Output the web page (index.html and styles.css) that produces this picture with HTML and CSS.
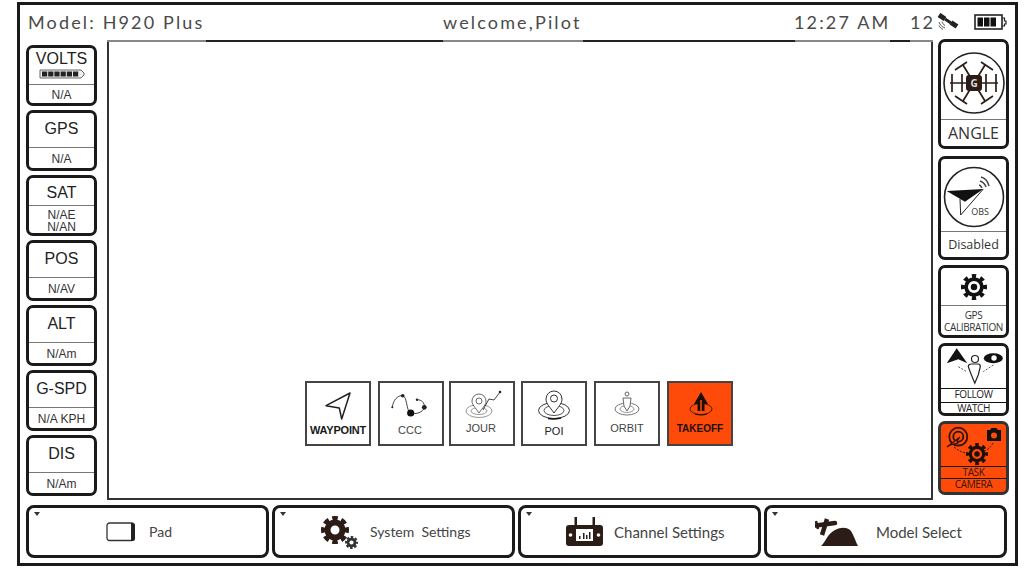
FILE: index.html
```html
<!DOCTYPE html>
<html lang="en">
<head>
    <meta charset="UTF-8">
    <title>H920 Plus</title>
    <link rel="stylesheet" href="styles.css">
</head>
<body>
    <!-- shared gears, used on the right column and the bottom bar -->
    <svg class="defs" width="0" height="0">
        <symbol id="gear" viewBox="-14 -14 28 28">
            <circle r="8.500" fill="none" stroke="currentColor" stroke-width="4"/>
            <circle r="11.500" fill="none" stroke="currentColor" stroke-width="5" pathLength="32" stroke-dasharray="2 2" stroke-dashoffset="1"/>
            <circle r="3.500" fill="currentColor"/>
        </symbol>
        <symbol id="gear-solid" viewBox="-14 -14 28 28">
            <circle r="7.500" fill="none" stroke="currentColor" stroke-width="6"/>
            <circle r="11.500" fill="none" stroke="currentColor" stroke-width="5" pathLength="32" stroke-dasharray="2.400 1.600" stroke-dashoffset="1.200"/>
        </symbol>
    </svg>

    <div class="frame">
        <!-- Top bar -->
        <div class="topbar">
            <span class="model">Model: H920 Plus</span>
            <span class="welcome">welcome,Pilot</span>
            <span class="clock">12:27 AM</span>
            <span class="sats">12</span>
            <svg class="sat-icon" width="22" height="18" viewBox="0 0 22 18">
                <path d="M2 2l6 4" fill="none" stroke="#222" stroke-width="5"/>
                <path d="M8 6l6 4" fill="none" stroke="#222" stroke-width="3"/>
                <path d="M14 9.500l6 4" fill="none" stroke="#222" stroke-width="5"/>
                <path d="M2 9c1 3 3 5 6 6M2 12.500c1 2 2 3 4 4M5 8.500c1 2 1 3 3 4" fill="none" stroke="#555" stroke-width="1"/>
            </svg>
            <svg class="batt-icon" width="33" height="16" viewBox="0 0 33 16">
                <rect x="1" y="1" width="27" height="14" fill="#fff" stroke="#222" stroke-width="1.600"/>
                <rect x="3.500" y="3.500" width="5.500" height="9" fill="#111"/>
                <rect x="10" y="3.500" width="5.500" height="9" fill="#111"/>
                <rect x="16.500" y="3.500" width="5.500" height="9" fill="#111"/>
                <path d="M28 4h2.500v3h1.500v3h-1.500v2h-2.500" fill="none" stroke="#222" stroke-width="1.200"/>
            </svg>
        </div>

        <div class="main">
            <!-- Left column -->
            <div class="stats">
                <div class="stat stat--volts">
                    <div class="stat__name">
                        <span>VOLTS</span>
                        <svg class="mini-batt" width="46" height="10" viewBox="0 0 46 10">
                            <path d="M1 1h41l3 3v2l-3 3h-41z" fill="#eee" stroke="#666" stroke-width="1"/>
                            <path d="M3 5h37" stroke="#222" stroke-width="5" stroke-dasharray="5.200 1"/>
                        </svg>
                    </div>
                    <div class="stat__value">N/A</div>
                </div>
                <div class="stat">
                    <div class="stat__name">GPS</div>
                    <div class="stat__value">N/A</div>
                </div>
                <div class="stat stat--sat">
                    <div class="stat__name">SAT</div>
                    <div class="stat__value stat__value--double">N/AE<br>N/AN</div>
                </div>
                <div class="stat">
                    <div class="stat__name">POS</div>
                    <div class="stat__value">N/AV</div>
                </div>
                <div class="stat">
                    <div class="stat__name">ALT</div>
                    <div class="stat__value">N/Am</div>
                </div>
                <div class="stat">
                    <div class="stat__name">G-SPD</div>
                    <div class="stat__value">N/A KPH</div>
                </div>
                <div class="stat">
                    <div class="stat__name">DIS</div>
                    <div class="stat__value">N/Am</div>
                </div>
            </div>

            <!-- Map area with flight modes -->
            <div class="map">
                <div class="modes">
                    <div class="mode">
                        <svg class="mode__icon" width="62" height="40" viewBox="0 0 62 40">
                            <path d="M43 10L19 22.700l13.300 2.300L34.700 36z" fill="none" stroke="#222" stroke-width="1.500" stroke-linejoin="round"/>
                        </svg>
                        <span class="mode__label mode__label--bold">WAYPOINT</span>
                    </div>
                    <div class="mode">
                        <svg class="mode__icon" width="62" height="40" viewBox="0 0 62 40">
                            <path d="M12.300 24.300C13 17 18 12 22.700 12.700S26 28 30.700 30s13-1 13.600-5.700-3-7.600-7-7.600" fill="none" stroke="#444" stroke-width="1"/>
                            <circle cx="12.300" cy="24.300" r="1" fill="#222"/>
                            <circle cx="22.700" cy="12.700" r="1.800" fill="#222"/>
                            <circle cx="30.700" cy="30" r="3.600" fill="#111"/>
                            <circle cx="44.300" cy="24.300" r="2.400" fill="#222"/>
                            <circle cx="37" cy="16.700" r="1.200" fill="#222"/>
                        </svg>
                        <span class="mode__label mode__label--left">CCC</span>
                    </div>
                    <div class="mode mode--jour">
                        <svg class="mode__icon" width="62" height="40" viewBox="0 0 62 40">
                            <ellipse cx="28" cy="28" rx="13" ry="6.500" fill="none" stroke="#999" stroke-width="1"/>
                            <ellipse cx="28" cy="28" rx="8" ry="3.500" fill="none" stroke="#999" stroke-width="1"/>
                            <path d="M28 30c-4-6-7-8-7-12a7 7 0 0 1 14 0c0 4-3 6-7 12z" fill="#fff" stroke="#666" stroke-width="1"/>
                            <circle cx="28" cy="18" r="3" fill="none" stroke="#666" stroke-width="1"/>
                            <path d="M32 27l6-11 5 1 6-8" fill="none" stroke="#444" stroke-width="1"/>
                            <circle cx="49" cy="9" r="1.300" fill="#222"/>
                        </svg>
                        <span class="mode__label mode__label--up mode__label--left">JOUR</span>
                    </div>
                    <div class="mode mode--poi">
                        <svg class="mode__icon" width="62" height="40" viewBox="0 0 62 40">
                            <ellipse cx="31" cy="27.500" rx="15.500" ry="8" fill="none" stroke="#333" stroke-width="1"/>
                            <ellipse cx="31" cy="27.500" rx="10" ry="5" fill="none" stroke="#555" stroke-width="1"/>
                            <path d="M31 30c-4-6-8-9-8-14a8 8 0 0 1 16 0c0 5-4 8-8 14z" fill="#fff" stroke="#333" stroke-width="1"/>
                            <circle cx="31" cy="15.500" r="3.500" fill="none" stroke="#333" stroke-width="1"/>
                            <path d="M25 35.500q6 1 13-.5" fill="none" stroke="#111" stroke-width="1.500"/>
                        </svg>
                        <span class="mode__label mode__label--down">POI</span>
                    </div>
                    <div class="mode">
                        <svg class="mode__icon" width="62" height="40" viewBox="0 0 62 40">
                            <ellipse cx="31" cy="26" rx="12" ry="6" fill="none" stroke="#777" stroke-width="1"/>
                            <ellipse cx="31" cy="26" rx="7" ry="3.500" fill="none" stroke="#999" stroke-width="1"/>
                            <circle cx="31" cy="11" r="2" fill="none" stroke="#666" stroke-width="1"/>
                            <path d="M27 15h8l-1 8-3 5-3-5z" fill="#fff" stroke="#666" stroke-width="1"/>
                        </svg>
                        <span class="mode__label mode__label--up">ORBIT</span>
                    </div>
                    <div class="mode mode--active">
                        <svg class="mode__icon" width="62" height="40" viewBox="0 0 62 40">
                            <ellipse cx="32" cy="26" rx="11" ry="5.500" fill="none" stroke="#5a1a00" stroke-width="1"/>
                            <path d="M32 9l-7 12h3.500v7h7v-7H39z" fill="#1c0f08"/>
                            <path d="M32 17v11" stroke="#ff4b0a" stroke-width="1.500"/>
                            <path d="M26 31q6 2 12 0" fill="none" stroke="#1c0f08" stroke-width="1.200"/>
                        </svg>
                        <span class="mode__label mode__label--takeoff">TAKEOFF</span>
                    </div>
                </div>
            </div>

            <!-- Right column -->
            <div class="tools">
                <div class="tool tool--angle">
                    <div class="tool__icon">
                        <svg width="62" height="62" viewBox="-31 -31 62 62">
                            <circle r="30" fill="#fff" stroke="#222" stroke-width="1.600"/>
                            <g fill="none" stroke="#2b1d16" stroke-width="1.700">
                                <path d="M-24 0H24M-11-18L11 18M11-18L-11 18"/>
                                <path d="M-22-9V9M-12-9V9M12-9V9M22-9V9"/>
                                <path d="M-19-13L-7-21M19-13L7-21M-19 13L-7 21M19 13L7 21"/>
                            </g>
                            <rect x="-8" y="-8" width="16" height="16" rx="3" fill="#2b1d16"/>
                            <text class="drone-g" y="3.500" text-anchor="middle">G</text>
                        </svg>
                    </div>
                    <div class="tool__label tool__label--big">ANGLE</div>
                </div>
                <div class="tool tool--obs">
                    <div class="tool__icon">
                        <svg width="62" height="62" viewBox="-1 -1 62 62">
                            <circle cx="30" cy="30" r="29.500" fill="#fff" stroke="#222" stroke-width="1.600"/>
                            <path d="M2.700 24L39.300 22 21 34.700z" fill="#111"/>
                            <path d="M39.300 22L16.700 48 16 32" fill="none" stroke="#222" stroke-width="1"/>
                            <path d="M36 14c3 1 5 3 6 6M37 10c4 1 7 5 8 9M35 18c1 0 2 1 3 3" fill="none" stroke="#444" stroke-width="1.500"/>
                            <text class="obs-text" x="36" y="48" text-anchor="middle">OBS</text>
                        </svg>
                    </div>
                    <div class="tool__label">Disabled</div>
                </div>
                <div class="tool tool--small">
                    <div class="tool__icon">
                        <svg class="gear" width="26" height="26"><use href="#gear"/></svg>
                    </div>
                    <div class="tool__label tool__label--tiny">GPS<br>CALIBRATION</div>
                </div>
                <div class="tool tool--small tool--split">
                    <div class="tool__icon">
                        <svg width="67" height="43" viewBox="0 0 67 43">
                            <path d="M6.700 18.300L16.700 3.300l10.600 15-9-4z" fill="#111"/>
                            <circle cx="35" cy="14" r="3.500" fill="#fff" stroke="#222" stroke-width="1.200"/>
                            <path d="M28.300 21.700q0-2.700 3-2.700h7q2 0 2 2.700l-2 8-3.500 8.500-3.500-8.500z" fill="#fff" stroke="#222" stroke-width="1.200"/>
                            <ellipse cx="53.300" cy="13.300" rx="9.500" ry="5" fill="#111"/>
                            <circle cx="54" cy="13" r="2.700" fill="#fff"/>
                            <path d="M18.300 21.700l8.400 5M53.300 20l-10 6.700" fill="none" stroke="#555" stroke-width="1" stroke-dasharray="2 1.500"/>
                        </svg>
                    </div>
                    <div class="tool__label tool__label--tiny tool__label--line">FOLLOW</div>
                    <div class="tool__label tool__label--tiny tool__label--line">WATCH</div>
                </div>
                <div class="tool tool--small tool--split tool--active">
                    <div class="tool__icon">
                        <svg width="67" height="43" viewBox="0 0 67 43">
                            <circle cx="18.300" cy="13.700" r="9" fill="none" stroke="#2a1208" stroke-width="1.800"/>
                            <circle cx="18.300" cy="13.700" r="5" fill="none" stroke="#2a1208" stroke-width="1.800"/>
                            <path d="M7 24l13-10-3 4 1 2-8 2z" fill="#ff4b0a" stroke="#2a1208" stroke-width="1.200"/>
                            <path d="M14 24q6 5 12 6M44 28q5-1 9-8" fill="none" stroke="#2a1208" stroke-width="1" stroke-dasharray="2 1.500"/>
                            <path d="M47 7h3l1.500-2h5L58 7h3v11H47z" fill="#111"/>
                            <circle cx="54" cy="12.500" r="3" fill="#ff4b0a"/>
                        </svg>
                        <svg class="gear gear--task" width="22" height="22"><use href="#gear"/></svg>
                    </div>
                    <div class="tool__label tool__label--tiny tool__label--line">TASK</div>
                    <div class="tool__label tool__label--tiny tool__label--line">CAMERA</div>
                </div>
            </div>
        </div>

        <!-- Bottom bar -->
        <div class="bottom">
            <div class="nav nav--pad">
                <svg class="nav__icon" width="30" height="20" viewBox="0 0 30 20">
                    <rect x="1" y="1" width="27" height="17.500" rx="2.500" fill="#fff" stroke="#333" stroke-width="1.300"/>
                    <path d="M25 1h1.500A2.500 2.500 0 0 1 29 3.500v13a2.500 2.500 0 0 1-2.500 2.500H25z" fill="#222"/>
                </svg>
                <span class="nav__text">Pad</span>
            </div>
            <div class="nav nav--system">
                <span class="nav__gears">
                    <svg class="gear gear--big" width="28" height="28"><use href="#gear-solid"/></svg>
                    <svg class="gear gear--mini" width="13" height="13"><use href="#gear-solid"/></svg>
                </span>
                <span class="nav__text">System&nbsp; Settings</span>
            </div>
            <div class="nav nav--channel">
                <svg class="nav__icon" width="38" height="30" viewBox="0 0 38 30">
                    <path d="M9 0h1.500v9H9zM27 0h1.500v9H27z" fill="#2b1d16" stroke="#2b1d16"/>
                    <rect x="0" y="8" width="37" height="21" rx="3" fill="#2b1d16"/>
                    <rect x="10" y="12" width="17" height="12" fill="#fff"/>
                    <path d="M13 22v-3h1.500v3zM17 22v-6h1.500v6zM20 22v-4h1.500v4zM23 22v-7h1.500v7z" fill="#2b1d16"/>
                    <circle cx="4.500" cy="18" r="1.800" fill="#fff"/>
                    <circle cx="32.500" cy="18" r="1.800" fill="#fff"/>
                </svg>
                <span class="nav__text">Channel Settings</span>
            </div>
            <div class="nav nav--model">
                <svg class="nav__icon" width="44" height="31" viewBox="0 0 44 31">
                    <path d="M6 30c4-3 6-12 14-16 6-3 11-3 15 0 3 3 5 10 8 16z" fill="#2b1d16"/>
                    <path d="M1 9.500L20 7" fill="none" stroke="#2b1d16" stroke-width="4.500" stroke-linecap="round"/>
                    <path d="M12 3L7 19" fill="none" stroke="#2b1d16" stroke-width="4.500"/>
                    <path d="M1 5l2 8" fill="none" stroke="#2b1d16" stroke-width="2.500"/>
                </svg>
                <span class="nav__text">Model Select</span>
            </div>
        </div>
    </div>
</body>
</html>
```
FILE: styles.css
```css
* {
    margin: 0;
    padding: 0;
    box-sizing: border-box;
}

body {
    font-family: "Liberation Sans", Arial, sans-serif;
    background-color: #fff;
    color: #222;
    overflow: hidden;
}

.defs {
    position: absolute;
}

.frame {
    width: 1001px;
    height: 564px;
    margin: 2px 0 0 17px;
    padding: 0 6px;
    border: 3px solid #1a1a1a;
}

/* top bar */
.topbar {
    display: flex;
    align-items: center;
    height: 34px;
    margin-left: -6px;
    font-family: Lato, sans-serif;
    font-size: 18px;
    letter-spacing: 2.15px;
    color: #4a4a4a;
}

.model {
    width: 423px;
    padding-left: 8px;
}

.welcome {
    width: 351px;
}

.clock {
    width: 116px;
}

.sats {
    width: 27px;
}

.sat-icon {
    margin-right: 15px;
}

/* main row */
.main {
    display: flex;
    height: 461px;
    margin-bottom: 5px;
}

.stats {
    display: flex;
    flex-direction: column;
    gap: 4px;
    width: 71px;
    padding-top: 6px;
}

.stat {
    display: flex;
    flex-direction: column;
    height: 61px;
    border: 3px solid #1a1a1a;
    border-radius: 7px;
}

.stat__name {
    display: flex;
    flex-direction: column;
    align-items: center;
    justify-content: center;
    height: 35px;
    padding-bottom: 2px;
    font-size: 16px;
    line-height: 16px;
    border-bottom: 1px solid #777;
}

.stat--volts .stat__name {
    height: 37px;
    justify-content: flex-start;
    padding: 3px 0 0;
}

.stat--sat .stat__name {
    padding: 3px 0 0;
}

.mini-batt {
    margin-top: 2px;
}

.stat__value {
    flex: 1;
    display: flex;
    align-items: center;
    justify-content: center;
    padding-top: 1px;
    font-size: 12px;
    color: #333;
}

.stat__value--double {
    display: block;
    padding-top: 3px;
    text-align: center;
    line-height: 12px;
}

.map {
    position: relative;
    display: flex;
    flex-direction: column;
    justify-content: flex-end;
    width: 826px;
    margin: 1px 5px 0 10px;
    padding-bottom: 52px;
    border: 2px solid #333;
}

/* the top line is grey under the title texts */
.map::before {
    content: "";
    position: absolute;
    top: -2px;
    left: -2px;
    right: -2px;
    height: 2px;
    background: linear-gradient(to right, #888 0, #888 99px, #222 99px, #222 336px, #888 336px, #888 476px, #222 476px, #222 688px, #888 688px, #888 783px, #222 783px, #222 803px, #888 803px);
}

.modes {
    display: flex;
    justify-content: center;
    gap: 7px;
    margin-right: 2px;
}

.mode {
    display: flex;
    flex-direction: column;
    align-items: center;
    width: 66px;
    height: 65px;
    border: 2px solid #444;
}

.mode--jour {
    margin-left: -2px;
}

.mode--poi {
    margin-left: -1px;
}

.mode--active {
    background-color: #ff4b0a;
}

.mode__icon {
    display: block;
    flex: none;
}

.mode__label {
    font-size: 11px;
    line-height: 14px;
    color: #444;
}

.mode__label--bold {
    font-weight: bold;
    color: #1a1a1a;
    letter-spacing: -0.2px;
}

.mode__label--up {
    margin-top: -2px;
}

.mode__label--left {
    margin-right: 2px;
}

.mode__label--takeoff {
    margin-top: -1px;
    font-size: 10px;
    font-weight: bold;
    color: #1c0f08;
}

.mode__label--down {
    margin-top: 1px;
    color: #222;
}

/* right column */
.tools {
    display: flex;
    flex-direction: column;
    gap: 5px;
    width: 71px;
}

.tool {
    display: flex;
    flex-direction: column;
    border: 3px solid #1a1a1a;
    border-radius: 7px;
    font-family: "Open Sans", sans-serif;
    overflow: hidden;
}

.tool--angle {
    height: 110px;
    margin-bottom: 2px;
}

.tool--obs {
    height: 104px;
}

.tool--small {
    height: 73px;
}

.tool--active {
    height: 74px;
    background-color: #ff4b0a;
    border-color: #333;
}

.tool__icon {
    position: relative;
    flex: 1;
    display: flex;
    align-items: center;
    justify-content: center;
    min-height: 0;
}

.tool--angle .tool__icon,
.tool--obs .tool__icon {
    padding-top: 4px;
}

.tool--split .tool__icon {
    align-items: flex-start;
}

.tool--split .tool__icon svg {
    flex: none;
    margin-top: -1px;
}

.tool__label {
    display: flex;
    align-items: center;
    justify-content: center;
    flex: none;
    height: 26px;
    font-size: 12.5px;
    color: #333;
    border-top: 1px solid #777;
}

.tool--angle .tool__label {
    height: 27px;
}

.tool__label--big {
    font-size: 16px;
}

.tool__label--tiny {
    display: block;
    height: 30px;
    padding-top: 3px;
    font-size: 10px;
    line-height: 12px;
    letter-spacing: -0.4px;
    text-align: center;
}

.tool__label--line {
    height: 14px;
    padding-top: 0;
    line-height: 11px;
    color: #222;
    border-top: 1px solid #111;
}

.tool--split .tool__label:last-child {
    height: 11px;
}

.tool--active .tool__label:nth-child(2) {
    height: 12px;
}

.tool--active .tool__label:last-child {
    height: 14px;
}

.tool--active .tool__label {
    color: #3a1404;
}

.gear {
    color: #111;
}

.tool--split .tool__icon .gear--task {
    position: absolute;
    left: 25px;
    top: 19px;
    margin: 0;
    color: #1c0f08;
}

.drone-g {
    font-size: 10px;
    font-weight: bold;
    fill: #ddd;
}

.obs-text {
    font-size: 9px;
    fill: #333;
}

/* bottom bar */
.bottom {
    display: flex;
    gap: 3px;
}

.nav {
    position: relative;
    display: flex;
    align-items: center;
    width: 243px;
    height: 53px;
    border: 3px solid #1a1a1a;
    border-radius: 8px;
    font-family: Lato, sans-serif;
    font-size: 14px;
    color: #444;
}

/* small marker in the corner */
.nav::before {
    content: "";
    position: absolute;
    top: 4px;
    left: 5px;
    border-left: 3px solid transparent;
    border-right: 3px solid transparent;
    border-top: 4px solid #333;
}

.nav--pad {
    padding-left: 77px;
    gap: 13px;
}

.nav--system {
    padding-left: 46px;
}

.nav--channel {
    padding-left: 45px;
    gap: 10px;
    font-size: 15px;
}

.nav--model {
    padding-left: 48px;
    gap: 17px;
    font-size: 15px;
}

.nav__icon {
    flex: none;
    display: block;
}

.nav__gears {
    position: relative;
    width: 49px;
    height: 36px;
}

.gear--big {
    position: absolute;
    left: 0;
    top: 2px;
    color: #2b1d16;
}

.gear--mini {
    position: absolute;
    left: 24px;
    top: 22px;
    color: #333;
}
```
